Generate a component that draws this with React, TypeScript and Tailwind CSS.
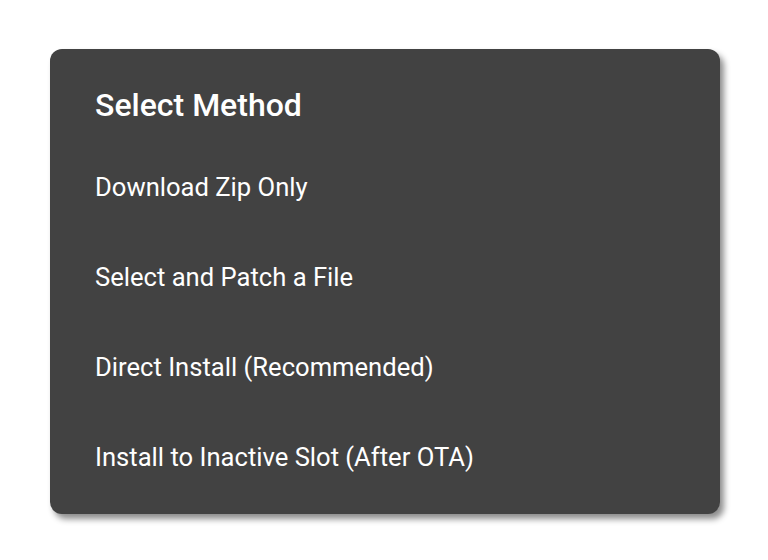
export default function App() {
  const methods = [
    "Download Zip Only",
    "Select and Patch a File",
    "Direct Install (Recommended)",
    "Install to Inactive Slot (After OTA)",
  ];

  return (
    <div className="h-[560px] w-[768px] bg-white pt-[49px] pl-[50px] font-['Roboto',sans-serif]">
      <div className="w-[670px] rounded-[12px] bg-[#424242] pt-[36px] pb-[12px] pl-[45px] shadow-[4px_5px_6px_rgba(0,0,0,0.45)]">
        <h2 className="mb-[17px] h-[40px] text-[32px] leading-[40px] font-medium text-white">
          Select Method
        </h2>
        <ul>
          {methods.map((m) => (
            <li key={m} className="flex h-[90px] items-center text-[25.6px] text-white">
              {m}
            </li>
          ))}
        </ul>
      </div>
    </div>
  );
}
